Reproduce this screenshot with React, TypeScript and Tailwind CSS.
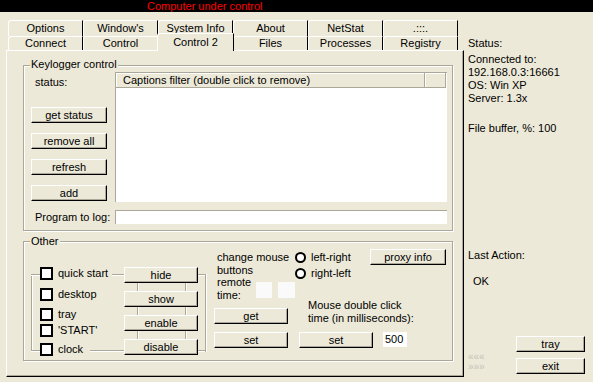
import React from "react";

function Btn({ className = "", children }: { className?: string; children: React.ReactNode }) {
  return (
    <div
      className={`flex items-center justify-center bg-[#ECE9D8] border border-t-white border-l-white border-r-black border-b-black shadow-[inset_-1px_-1px_0_#ACA899] leading-none ${className}`}
    >
      {children}
    </div>
  );
}

function Tab({ children }: { children: React.ReactNode }) {
  return (
    <div className="w-[75px] h-full flex items-center justify-center border-t border-l border-r border-t-white border-l-white border-r-black rounded-tl-[3px] leading-none">
      {children}
    </div>
  );
}

function Check({ label, className = "" }: { label: string; className?: string }) {
  return (
    <div className={`flex items-center h-[13px] gap-[5px] ${className}`}>
      <div className="w-[13px] h-[13px] border-2 border-black bg-white shrink-0" />
      <span className="leading-[13px] whitespace-nowrap">{label}</span>
    </div>
  );
}

function Radio({ label, className = "" }: { label: string; className?: string }) {
  return (
    <div className={`flex items-center h-[11px] gap-[5px] ${className}`}>
      <div className="w-[11px] h-[11px] rounded-full border-2 border-black bg-white shrink-0" />
      <span className="leading-[13px] whitespace-nowrap">{label}</span>
    </div>
  );
}

function HLine({ className }: { className: string }) {
  return <div className={`absolute h-[2px] border-t border-b border-t-[#ACA899] border-b-white ${className}`} />;
}
function VLine({ className }: { className: string }) {
  return <div className={`absolute w-[2px] border-l border-r border-l-[#ACA899] border-r-white ${className}`} />;
}

export default function App() {
  return (
    <div className="w-[593px] h-[382px] bg-[#ECE9D8] text-black text-[11px] font-['Liberation_Sans',Arial,sans-serif] overflow-hidden flex flex-col">
      {/* title bar */}
      <div className="h-[12px] bg-black shrink-0 pl-[147px] leading-[12px] text-[#FF0000] whitespace-nowrap">
        Computer under control
      </div>

      <div className="flex flex-1">
        {/* left: tabs + page */}
        <div className="w-[464px] shrink-0 flex flex-col">
          <div className="flex ml-[8px] mt-[8px] h-[16px]">
            <Tab>Options</Tab>
            <Tab>Window's</Tab>
            <Tab>System Info</Tab>
            <Tab>About</Tab>
            <Tab>NetStat</Tab>
            <Tab>.:::.</Tab>
          </div>
          <div className="flex items-end ml-[8px] h-[14px]">
            <Tab>Connect</Tab>
            <Tab>Control</Tab>
            <div className="relative z-10 w-[77px] h-[18px] -ml-[1px] -mr-[1px] -mb-[1px] bg-[#ECE9D8] flex items-center justify-center border-t border-l border-r border-t-white border-l-white border-r-black rounded-tl-[3px] leading-none pb-[1px]">
              Control 2
            </div>
            <Tab>Files</Tab>
            <Tab>Processes</Tab>
            <Tab>Registry</Tab>
          </div>

          {/* page */}
          <div className="ml-[6px] w-[458px] h-[327px] border border-t-white border-l-white border-r-black border-b-black shadow-[inset_-1px_-1px_0_#ACA899] flex flex-col">
            {/* Keylogger control */}
            <div className="relative ml-[16px] mt-[14px] w-[430px] h-[166px] border border-[#ACA899] shadow-[inset_1px_1px_0_#ffffff,1px_1px_0_#ffffff]">
              <span className="absolute left-[6px] top-[-8px] px-[1px] bg-[#ECE9D8] leading-[13px] whitespace-nowrap">
                Keylogger control
              </span>
              <div className="flex pt-[6px]">
                <div className="w-[91px] flex flex-col">
                  <div className="pl-[11px] mt-[4px] leading-[13px]">status:</div>
                  <div className="pl-[7px] mt-[18px] flex flex-col gap-[10px]">
                    <Btn className="w-[76px] h-[16px]">get status</Btn>
                    <Btn className="w-[76px] h-[16px]">remove all</Btn>
                    <Btn className="w-[76px] h-[16px]">refresh</Btn>
                    <Btn className="w-[76px] h-[16px]">add</Btn>
                  </div>
                </div>
                <div className="w-[332px] h-[130px] bg-white border-t border-l border-t-[#ACA899] border-l-[#ACA899] flex flex-col">
                  <div className="flex h-[15px] shrink-0">
                    <div className="w-[309px] bg-[#ECE9D8] border-r border-b border-[#ACA899] shadow-[inset_1px_1px_0_#ffffff] pl-[7px] leading-[14px] whitespace-nowrap">
                      Captions filter (double click to remove)
                    </div>
                    <div className="w-[21px] bg-[#ECE9D8] border-r border-b border-[#ACA899] shadow-[inset_1px_1px_0_#ffffff]" />
                  </div>
                </div>
              </div>
              <div className="flex items-center mt-[8px]">
                <div className="w-[91px] pl-[11px] leading-[13px] whitespace-nowrap">Program to log:</div>
                <div className="w-[332px] h-[14px] bg-white border-t border-l border-t-[#ACA899] border-l-[#ACA899]" />
              </div>
            </div>

            {/* Other */}
            <div className="relative ml-[16px] mt-[10px] w-[430px] h-[120px] border border-[#ACA899] shadow-[inset_1px_1px_0_#ffffff,1px_1px_0_#ffffff]">
              <span className="absolute left-[6px] top-[-7px] px-[1px] bg-[#ECE9D8] leading-[13px]">Other</span>

              {/* bracket decorations */}
              <VLine className="left-[7px] top-[32px] h-[77px]" />
              <HLine className="left-[7px] top-[32px] w-[9px]" />
              <HLine className="left-[7px] top-[108px] w-[9px]" />
              <HLine className="left-[88px] top-[32px] w-[12px]" />
              <HLine className="left-[66px] top-[108px] w-[34px]" />
              <HLine className="left-[174px] top-[32px] w-[8px]" />
              <HLine className="left-[174px] top-[108px] w-[8px]" />
              <VLine className="left-[181px] top-[32px] h-[78px]" />
              <VLine className="left-[113px] top-[41px] h-[8px]" />
              <VLine className="left-[161px] top-[41px] h-[8px]" />
              <VLine className="left-[113px] top-[65px] h-[8px]" />
              <VLine className="left-[161px] top-[65px] h-[8px]" />
              <VLine className="left-[113px] top-[89px] h-[8px]" />
              <VLine className="left-[161px] top-[89px] h-[8px]" />

              <div className="flex items-start">
                <div className="ml-[16px] w-[84px] pt-[25px] flex flex-col">
                  <Check label="quick start" />
                  <Check label="desktop" className="mt-[8px]" />
                  <Check label="tray" className="mt-[7px]" />
                  <Check label="'START'" className="mt-[3px]" />
                  <Check label="clock" className="mt-[6px]" />
                </div>
                <div className="w-[74px] pt-[25px] flex flex-col gap-[8px]">
                  <Btn className="w-[74px] h-[16px]">hide</Btn>
                  <Btn className="w-[74px] h-[16px]">show</Btn>
                  <Btn className="w-[74px] h-[16px]">enable</Btn>
                  <Btn className="w-[74px] h-[16px]">disable</Btn>
                </div>
                <div className="ml-[16px] flex flex-col">
                  <div className="flex h-[57px] items-start">
                    <div className="w-[81px] pl-[3px] pt-[9px] leading-[12.5px] whitespace-nowrap">
                      <div>change mouse</div>
                      <div>buttons</div>
                      <div className="flex items-start">
                        <div className="w-[40px]">
                          <div>remote</div>
                          <div>time:</div>
                        </div>
                        <div className="w-[17px] h-[16px] mt-[6px] bg-[#FAFAFA]" />
                        <div className="w-[17px] h-[16px] mt-[6px] ml-[6px] bg-[#FAFAFA]" />
                      </div>
                    </div>
                    <div className="w-[75px] pt-[10px] flex flex-col">
                      <Radio label="left-right" />
                      <Radio label="right-left" className="mt-[5px]" />
                    </div>
                    <div className="pt-[7px]">
                      <Btn className="w-[76px] h-[16px]">proxy info</Btn>
                    </div>
                  </div>
                  <div className="flex items-start">
                    <div className="w-[74px] pt-[9px] flex flex-col gap-[8px]">
                      <Btn className="w-[74px] h-[16px]">get</Btn>
                      <Btn className="w-[74px] h-[16px]">set</Btn>
                    </div>
                    <div className="ml-[11px] flex flex-col">
                      <div className="pl-[9px] leading-[13px] whitespace-nowrap">
                        <div>Mouse double click</div>
                        <div>time (in milliseconds):</div>
                      </div>
                      <div className="flex items-start mt-[7px]">
                        <Btn className="w-[74px] h-[16px]">set</Btn>
                        <div className="ml-[10px] w-[24px] h-[15px] bg-white pl-[2px] leading-[15px]">500</div>
                      </div>
                    </div>
                  </div>
                </div>
              </div>
            </div>
          </div>
        </div>

        {/* right: status */}
        <div className="flex-1 flex flex-col pl-[4px] pt-[25px] leading-[13px] whitespace-nowrap">
          <div>Status:</div>
          <div className="mt-[3px]">Connected to:</div>
          <div>192.168.0.3:16661</div>
          <div>OS: Win XP</div>
          <div>Server: 1.3x</div>
          <div className="mt-[17px]">File buffer, %: 100</div>
          <div className="mt-[114px]">Last Action:</div>
          <div className="mt-[13px] pl-[5px]">OK</div>
          <div className="flex mt-[48px]">
            <div className="w-[48px] pt-[16px] text-[10px] leading-[10px] text-[#C4C2B8]">
              <div>«««</div>
              <div>»»»</div>
            </div>
            <div className="flex flex-col gap-[6px]">
              <Btn className="w-[69px] h-[16px]">tray</Btn>
              <Btn className="w-[69px] h-[16px]">exit</Btn>
            </div>
          </div>
        </div>
      </div>
    </div>
  );
}
